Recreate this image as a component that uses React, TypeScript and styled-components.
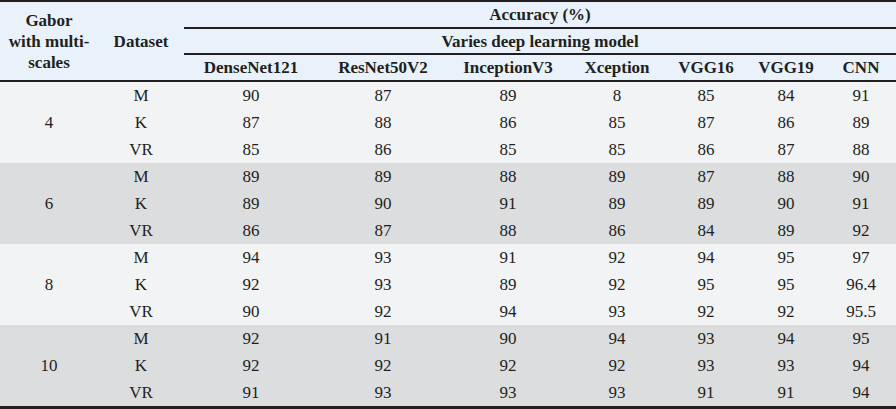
import React from 'react'
import styled, { createGlobalStyle } from 'styled-components'

const GlobalStyle = createGlobalStyle`
  html, body {
    margin: 0;
    padding: 0;
    background: #ffffff;
  }
`

const ink = '#231f20'
const headerBg = '#e9f2fa'
const lightBg = '#f2f3f5'
const darkBg = '#dcdddf'

const Table = styled.div`
  display: grid;
  grid-template-columns: 98px 86px 134px 130px 120px 98px 80px 80px 70px;
  grid-template-rows: 27px 26px 27px;
  grid-auto-rows: 27px;
  width: 896px;
  border-top: 2px solid ${ink};
  border-bottom: 3px solid ${ink};
  font-family: 'Liberation Serif', 'Times New Roman', serif;
  font-size: 17px;
  color: ${ink};
`

const HeadCell = styled.div<{ $span?: number; $rows?: number; $rule?: boolean }>`
  grid-column: span ${(p) => p.$span ?? 1};
  grid-row: span ${(p) => p.$rows ?? 1};
  display: flex;
  align-items: center;
  justify-content: center;
  text-align: center;
  font-weight: bold;
  line-height: 21px;
  background: ${headerBg};
  border-bottom: ${(p) => (p.$rule ? `2px solid ${ink}` : 'none')};
  box-sizing: border-box;
`

const GroupCell = styled.div<{ $shade: boolean }>`
  grid-row: span 3;
  display: flex;
  align-items: center;
  justify-content: center;
  background: ${(p) => (p.$shade ? darkBg : lightBg)};
`

const Cell = styled.div<{ $shade: boolean }>`
  display: flex;
  align-items: center;
  justify-content: center;
  padding-top: 1px;
  background: ${(p) => (p.$shade ? darkBg : lightBg)};
`

const models = ['DenseNet121', 'ResNet50V2', 'InceptionV3', 'Xception', 'VGG16', 'VGG19', 'CNN']

const groups = [
  {
    scale: '4',
    rows: [
      ['M', '90', '87', '89', '8', '85', '84', '91'],
      ['K', '87', '88', '86', '85', '87', '86', '89'],
      ['VR', '85', '86', '85', '85', '86', '87', '88'],
    ],
  },
  {
    scale: '6',
    rows: [
      ['M', '89', '89', '88', '89', '87', '88', '90'],
      ['K', '89', '90', '91', '89', '89', '90', '91'],
      ['VR', '86', '87', '88', '86', '84', '89', '92'],
    ],
  },
  {
    scale: '8',
    rows: [
      ['M', '94', '93', '91', '92', '94', '95', '97'],
      ['K', '92', '93', '89', '92', '95', '95', '96.4'],
      ['VR', '90', '92', '94', '93', '92', '92', '95.5'],
    ],
  },
  {
    scale: '10',
    rows: [
      ['M', '92', '91', '90', '94', '93', '94', '95'],
      ['K', '92', '92', '92', '92', '93', '93', '94'],
      ['VR', '91', '93', '93', '93', '91', '91', '94'],
    ],
  },
]

export default function App() {
  return (
    <>
      <GlobalStyle />
      <Table>
        <HeadCell $rows={3} $rule>
          Gabor
          <br />
          with multi-
          <br />
          scales
        </HeadCell>
        <HeadCell $rows={3} $rule>
          Dataset
        </HeadCell>
        <HeadCell $span={7} $rule>
          Accuracy (%)
        </HeadCell>
        <HeadCell $span={7} $rule>
          Varies deep learning model
        </HeadCell>
        {models.map((m) => (
          <HeadCell key={m} $rule>
            {m}
          </HeadCell>
        ))}
        {groups.map((g, gi) => {
          const shade = gi % 2 === 1
          return (
            <React.Fragment key={g.scale}>
              <GroupCell $shade={shade}>{g.scale}</GroupCell>
              {g.rows.map((row, ri) =>
                row.map((v, ci) => (
                  <Cell
                    key={`${ri}-${ci}`}
                    $shade={shade}
                    style={{ gridRow: `${4 + gi * 3 + ri}`, gridColumn: `${ci + 2}` }}
                  >
                    {v}
                  </Cell>
                )),
              )}
            </React.Fragment>
          )
        })}
      </Table>
    </>
  )
}
